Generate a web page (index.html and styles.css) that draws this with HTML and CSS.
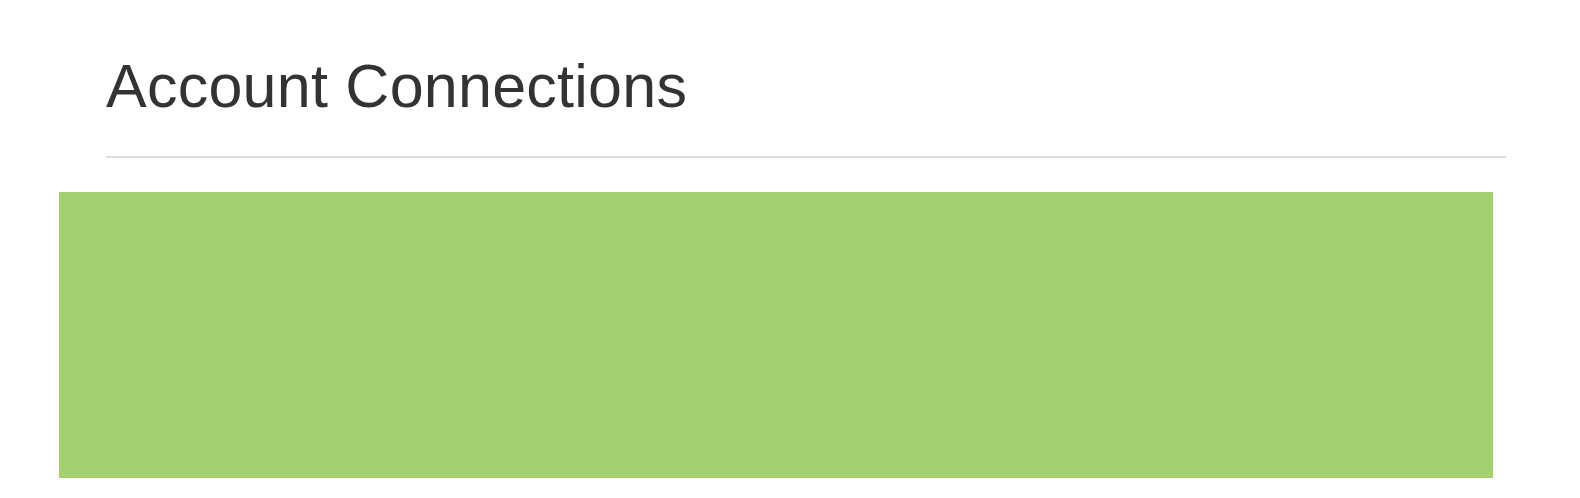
FILE: index.html
```html
<!DOCTYPE html>
<html lang="en">
<head>
<meta charset="utf-8">
<title>Account Connections</title>
<link rel="stylesheet" href="styles.css">
</head>
<body>
<main class="page">
  <header class="page-header">
    <h1 class="page-title">Account Connections</h1>
  </header>
  <section class="connections-panel"></section>
</main>
</body>
</html>
```

FILE: styles.css
```css
html, body {
  margin: 0;
  padding: 0;
  background: #ffffff;
}

.page {
  display: flex;
  flex-direction: column;
  padding: 53px 87px 0 59px;
  font-family: "Liberation Sans", Arial, sans-serif;
}

.page-header {
  margin: 0 -13px 0 47px;
  padding-bottom: 36px;
  border-bottom: 2px solid #dddddd;
}

.page-title {
  margin: 0;
  font-size: 61px;
  line-height: 67px;
  font-weight: 400;
  letter-spacing: 0.25px;
  color: #333333;
}

.connections-panel {
  margin-top: 34px;
  height: 286px;
  background: #a4d170;
}
```
